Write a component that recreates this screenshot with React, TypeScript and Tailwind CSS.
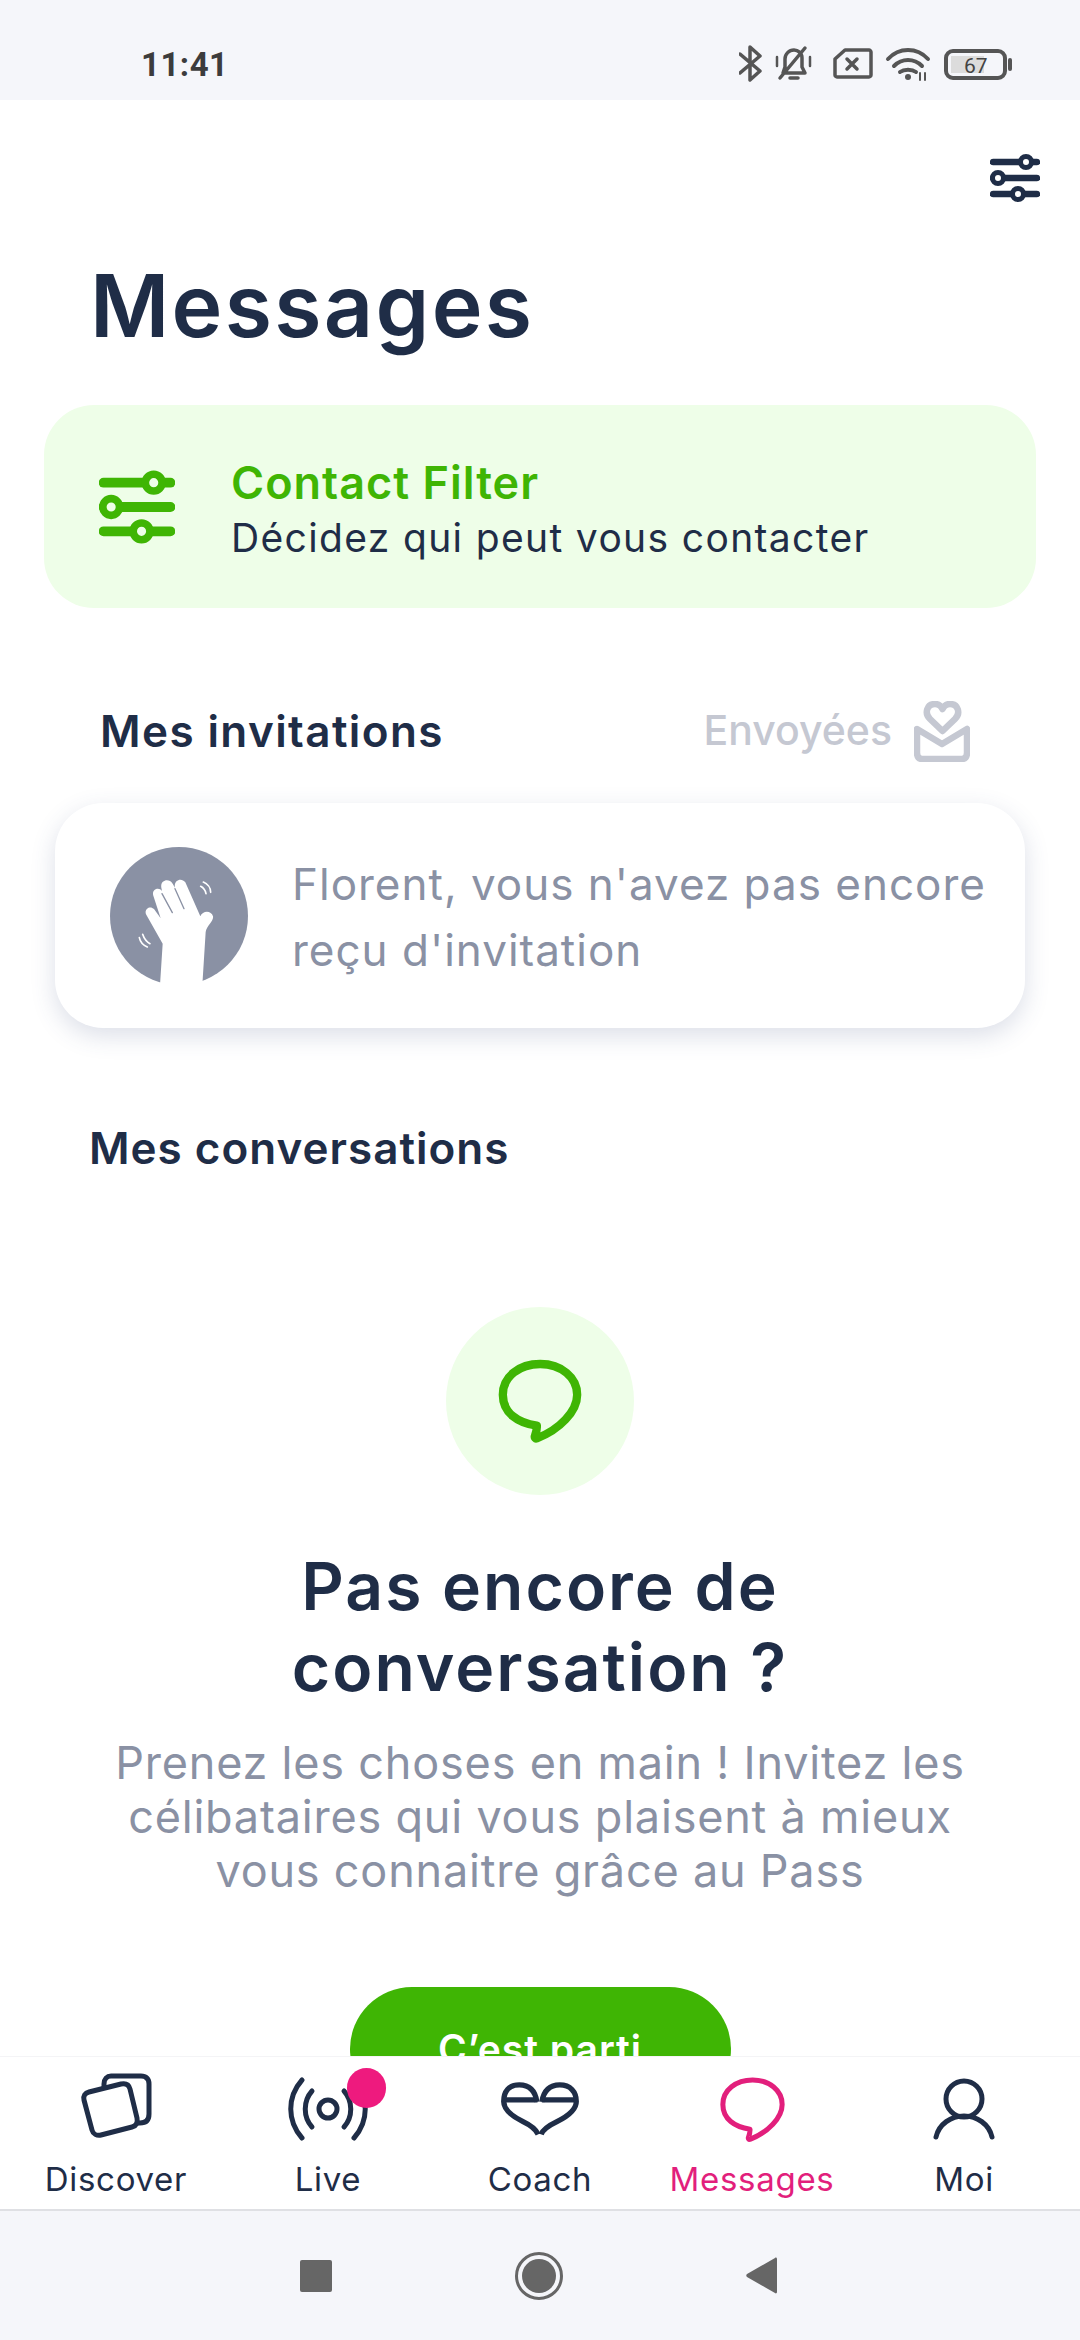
const navy = "#1f2d47";

function Sliders({ color, hole, className }: { color: string; hole: string; className: string }) {
  return (
    <svg viewBox="0 0 50 50" className={className} fill="none">
      <g stroke={color} strokeWidth="6.5" strokeLinecap="round">
        <path d="M3 9H47" />
        <path d="M3 25H47" />
        <path d="M3 41H47" />
      </g>
      <g fill={hole} stroke={color} strokeWidth="5">
        <circle cx="36" cy="9" r="5.5" />
        <circle cx="8" cy="25" r="5.5" />
        <circle cx="28" cy="41" r="5.5" />
      </g>
    </svg>
  );
}

function Bubble({ color, className, width }: { color: string; className: string; width: number }) {
  return (
    <svg viewBox="236 238 251 252" className={className} fill="none">
      <path
        d="M352 438C295 430 250 400 250 345C250 290 300 253 362 253C425 253 473 293 473 345C473 395 420 450 352 476C348 478 345 474 346 470C350 458 353 450 352 438Z"
        stroke={color}
        strokeWidth={width}
        strokeLinejoin="round"
      />
    </svg>
  );
}

function Hand() {
  return (
    <svg viewBox="210 500 414 414" className="w-[138px] h-[138px] shrink-0">
      <circle cx="417" cy="707" r="207" fill="#8a91a4" />
      <path
        d="M360 914L368 790L318 702C312 686 330 674 342 686L362 714L340 646C334 628 356 618 366 632L364 622C360 600 386 592 398 610L405 622C400 600 424 590 436 606L481 708C488 690 514 690 519 708C522 722 500 735 497 755L487 914Z"
        fill="#ffffff"
      />
      <g stroke="#8a91a4" strokeWidth="4" fill="none" strokeLinecap="round">
        <path d="M366 640L397 697" />
        <path d="M405 625L432 685" />
      </g>
      <g stroke="#ffffff" strokeWidth="5" fill="none" strokeLinecap="round">
        <path d="M482 618C490 622 496 630 498 640" />
        <path d="M490 605C502 610 512 622 512 636" />
        <path d="M298 772C300 782 308 794 322 800" />
        <path d="M308 762C312 774 318 784 330 790" />
      </g>
    </svg>
  );
}

function NavItem({ label, active, children }: { label: string; active?: boolean; children: React.ReactNode }) {
  return (
    <div className="flex flex-col items-center w-[212px]">
      <div className="relative h-[80px] w-[120px] flex items-center justify-center">{children}</div>
      <span className={`mt-[10px] text-[33px] leading-[40px] tracking-[0.7px] ${active ? "text-[#e21f7c]" : "text-[#1f2d47]"}`}>{label}</span>
    </div>
  );
}

export default function App() {
  return (
    <div className="w-[1080px] h-[2340px] flex flex-col overflow-hidden bg-white font-['Inter','Liberation_Sans',sans-serif]">
      <header className="h-[100px] shrink-0 bg-[#f5f6fa] flex items-center justify-between pl-[141px] pr-[68px] pt-[24px]">
        <span className="mt-[6px] font-['Roboto',sans-serif] font-bold text-[33px] leading-[40px] tracking-[0.5px] text-[#3c3c3c]">11:41</span>
        <svg viewBox="0 0 273 40" className="w-[273px] h-[40px]" fill="none" stroke="#555" strokeWidth="3.5" strokeLinecap="round" strokeLinejoin="round">
          <path d="M1 12L21 29L11 38V5L21 14L1 31" />
          <path d="M44 31H66L63 25V16C63 11 59 8 55 8C50 8 46 12 46 17V25ZM41 36L66 6M51 36H59" />
          <path d="M38 15V24M71 15V24" strokeWidth="2.5" />
          <path d="M96 17L106 8H130C131 8 132 9 132 10V33C132 34 131 35 130 35H98C97 35 96 34 96 33ZM108 17L118 27M118 17L108 27" />
          <path d="M149 17C160 5 178 5 189 17M155 24C163 16 175 16 183 24M161 30C165 27 173 27 177 30" strokeWidth="4" />
          <circle cx="169" cy="35" r="3" fill="#555" stroke="none" />
          <path d="M181 31V38M186 31V38" strokeWidth="2" />
          <rect x="207" y="9" width="59" height="27" rx="7" strokeWidth="4" />
          <rect x="212" y="14" width="33" height="17" fill="#dcdcdc" stroke="none" />
          <path d="M271 18V27" strokeWidth="4" />
          <text x="225" y="31" fontSize="21" fill="#444" stroke="none" fontFamily="Roboto">67</text>
        </svg>
      </header>

      <main className="flex-1 min-h-0 overflow-hidden flex flex-col">
        <div className="flex justify-end pt-[53px] pr-[40px]">
          <Sliders color={navy} hole="#ffffff" className="w-[50px] h-[50px]" />
        </div>
        <h1 className="mt-[53px] pl-[90px] text-[86px] leading-[100px] tracking-[2.3px] font-semibold text-[#1f2d47]">Messages</h1>

        <div className="mt-[49px] mx-[44px] h-[203px] rounded-[50px] bg-[#eefee8] flex items-center pl-[55px] shrink-0">
          <Sliders color="#3fb504" hole="#eefee8" className="w-[76px] h-[76px]" />
          <div className="ml-[56px] pt-[8px]">
            <div className="text-[45px] leading-[55px] tracking-[1px] font-semibold text-[#3fb504]">Contact Filter</div>
            <div className="text-[39px] leading-[56px] tracking-[1.35px] text-[#1f2d47]">Décidez qui peut vous contacter</div>
          </div>
        </div>

        <div className="mt-[93px] mb-[1px] pl-[100px] pr-[110px] flex items-center justify-between h-[60px] shrink-0">
          <span className="text-[44px] tracking-[1.4px] font-semibold text-[#1f2d47]">Mes invitations</span>
          <span className="flex items-center gap-[22px] text-[41px] font-medium text-[#c5c8d2]">
            Envoyées
            <svg viewBox="0 0 56 61" className="w-[56px] h-[61px]" fill="none" stroke="#c5c8d2" strokeWidth="6.5" strokeLinecap="round" strokeLinejoin="round">
              <path d="M28.5 30L16 18C10 12 13 3 21 3C24.5 3 27 5 28.5 8C30 5 32.5 3 36 3C44 3 47 12 41 18Z" />
              <path d="M3 28L28 43L53 28V52C53 56 51 58 48 58H8C5 58 3 56 3 52Z" />
            </svg>
          </span>
        </div>

        <div className="mt-[41px] mx-[55px] h-[225px] shrink-0 rounded-[48px] bg-white shadow-[0_8px_24px_rgba(60,80,130,0.18)] flex items-center pl-[55px]">
          <Hand />
          <p className="ml-[44px] pt-[2px] text-[44px] leading-[66px] tracking-[1px] text-[#8a91a4]">
            Florent, vous n'avez pas encore
            <br />
            reçu d'invitation
          </p>
        </div>

        <h2 className="mt-[90px] pl-[89px] text-[44px] leading-[60px] tracking-[1px] font-semibold text-[#1f2d47]">Mes conversations</h2>

        <div className="mt-[129px] self-center w-[188px] h-[188px] rounded-full bg-[#eefee8] flex items-center justify-center shrink-0">
          <Bubble color="#3fb504" width={25} className="w-[84px] h-[84px]" />
        </div>

        <h3 className="mt-[51px] text-center text-[66px] leading-[81px] tracking-[2px] font-semibold text-[#1f2d47]">
          Pas encore de
          <br />
          conversation ?
        </h3>

        <p className="mt-[28px] text-center text-[45px] leading-[54px] tracking-[0.8px] text-[#8a91a4]">
          Prenez les choses en main ! Invitez les
          <br />
          célibataires qui vous plaisent à mieux
          <br />
          vous connaitre grâce au Pass
        </p>

        <div className="mt-[89px] self-center w-[381px] h-[124px] shrink-0 rounded-[62px] bg-[#3fb504] flex items-center justify-center text-white text-[39px] tracking-[1px] font-semibold">
          C’est parti
        </div>
      </main>

      <nav className="h-[155px] shrink-0 bg-white border-t border-[#f4f4f6] border-b-2 border-b-[#dfe0e4] flex items-start justify-center pt-[12px] -mt-[1px] relative">
        <NavItem label="Discover">
          <svg viewBox="0 0 72 72" className="w-[72px] h-[72px]" fill="none" stroke={navy} strokeWidth="5" strokeLinejoin="round">
            <path d="M24 14V11C24 6 27 3 31 3H61C66 3 69 6 69 11V41C69 47 66 50 60 50H56" />
            <path d="M9 19L41 11C46 10 49 12 50 16L57 45C58 50 56 53 52 54L21 62C17 63 13 61 12 57L4 27C3 23 5 20 9 19Z" />
          </svg>
        </NavItem>
        <NavItem label="Live">
          <svg viewBox="0 0 80 64" className="w-[80px] h-[64px]" fill="none" stroke={navy} strokeWidth="5" strokeLinecap="round">
            <path d="M14 3C-1 20 -1 44 14 61" />
            <path d="M66 3C81 20 81 44 66 61" />
            <path d="M24 14C15 24 15 40 24 50" />
            <path d="M56 14C65 24 65 40 56 50" />
            <circle cx="40" cy="32" r="9" />
          </svg>
          <span className="absolute top-[-1px] right-[2px] w-[39px] h-[40px] rounded-full bg-[#ee1a7e]" />
        </NavItem>
        <NavItem label="Coach">
          <svg viewBox="90 40 245 175" className="w-[82px] h-[58px]" fill="none" stroke={navy} strokeWidth="16" strokeLinecap="butt" strokeLinejoin="round">
            <path d="M205 100H102" />
            <path d="M203 106C198 72 180 55 150 55C118 55 103 75 103 105C103 130 130 150 160 165C185 177 200 188 207 204" />
            <path d="M218 100H323" />
            <path d="M218 106C224 72 242 55 272 55C304 55 322 75 322 105C322 130 295 150 265 165C240 177 222 188 216 204" />
          </svg>
        </NavItem>
        <NavItem label="Messages" active>
          <Bubble color="#e21f7c" width={19} className="w-[67px] h-[67px]" />
        </NavItem>
        <NavItem label="Moi">
          <svg viewBox="0 0 62 62" className="w-[62px] h-[62px]" fill="none" stroke={navy} strokeWidth="5" strokeLinecap="round">
            <circle cx="31" cy="21" r="18" />
            <path d="M3 59C6 46 18 38 31 38C44 38 56 46 59 59" />
          </svg>
        </NavItem>
      </nav>

      <footer className="h-[129px] shrink-0 bg-[#f5f6fa] flex items-center justify-center pr-[4px]">
        <div className="flex items-center gap-[183px]">
          <span className="w-[32px] h-[32px] rounded-[2px] bg-[#666666]" />
          <span className="w-[48px] h-[48px] rounded-full border-[3px] border-[#666666] flex items-center justify-center">
            <span className="w-[34px] h-[34px] rounded-full bg-[#666666]" />
          </span>
          <svg viewBox="0 0 31 37" className="w-[31px] h-[37px]" fill="#666666"><path d="M31 2V35C31 36 30 37 29 36L1 20C0 19 0 18 1 17L29 1C30 0 31 1 31 2Z" /></svg>
        </div>
      </footer>
    </div>
  );
}
